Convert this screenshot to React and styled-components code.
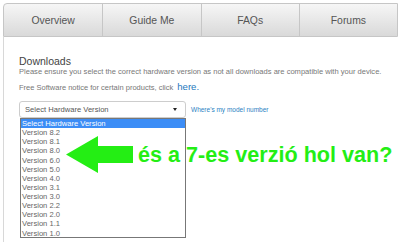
import React from 'react';
import styled, { createGlobalStyle } from 'styled-components';

const GlobalStyle = createGlobalStyle`
  html, body {
    margin: 0;
    padding: 0;
    background: #fff;
  }
  #root {
    width: 400px;
    height: 242px;
    overflow: hidden;
  }
`

const Page = styled.div`
  position: relative;
  width: 400px;
  height: 242px;
  box-sizing: border-box;
  padding: 3px 2px 0 3px;
  display: flex;
  flex-direction: column;
  font-family: "Liberation Sans", Arial, sans-serif;
  background: #fff;
`

const TabBar = styled.div`
  display: grid;
  grid-template-columns: repeat(4, 1fr);
  height: 32px;
  border: 1px solid #c6c6c6;
  border-radius: 4px 0 0 0;
  background: linear-gradient(#f6f6f6, #d9d9d9);
`

const Tab = styled.div`
  display: flex;
  align-items: center;
  justify-content: center;
  font-size: 10.4px;
  color: #555;
  border-left: ${props => (props.first ? 'none' : '1px solid #c6c6c6')};
`

const Panel = styled.div`
  flex: 1;
  border-left: 1px solid #d8d8d8;
  padding: 18px 0 0 15px;
`

const Title = styled.div`
  font-size: 10.5px;
  line-height: 12px;
  color: #444;
`

const Desc = styled.div`
  font-size: 7.55px;
  line-height: 9px;
  color: #777;
  white-space: nowrap;
`

const Notice = styled.div`
  margin-top: 5px;
  font-size: 7.5px;
  line-height: 12px;
  color: #777;
  white-space: nowrap;
`

const Link = styled.span`
  color: ${props => (props.strong ? '#2579bd' : '#2b7fc3')};
  font-size: ${props => props.size || 7}px;
  margin-left: ${props => props.gap || 0}px;
`

const SelectRow = styled.div`
  margin-top: 7px;
  display: flex;
  align-items: center;
  gap: 5px;
`

const SelectWrap = styled.div`
  position: relative;
`

const SelectBox = styled.div`
  box-sizing: border-box;
  width: 167px;
  height: 17px;
  border: 1px solid #cdcdcd;
  border-radius: 3px;
  display: flex;
  align-items: center;
  justify-content: space-between;
  padding: 0 8px 0 5px;
  font-size: 7.6px;
  color: #555;
`

const Caret = styled.span`
  width: 0;
  height: 0;
  border-left: 2.5px solid transparent;
  border-right: 2.5px solid transparent;
  border-top: 3px solid #222;
`

const DropList = styled.div`
  position: absolute;
  top: 17px;
  left: 1px;
  right: 0;
  box-sizing: border-box;
  height: 120px;
  border: 1px solid #777;
  background: #fff;
  z-index: 2;
`

const Option = styled.div`
  height: 9.14px;
  line-height: 9.14px;
  padding-left: 1px;
  font-size: 7.6px;
  color: ${props => (props.active ? '#fff' : '#666')};
  background: ${props => (props.active ? '#3c8df6' : 'transparent')};
  white-space: nowrap;
`

const Arrow = styled.svg`
  position: absolute;
  left: 0;
  top: 0;
  z-index: 3;
`

const Remark = styled.div`
  position: absolute;
  left: 138px;
  top: 143px;
  font-family: "Liberation Sans", Arial, sans-serif;
  font-weight: bold;
  font-size: 21.6px;
  line-height: 1.117;
  color: #24ee14;
  white-space: nowrap;
  z-index: 3;
`

const tabs = ['Overview', 'Guide Me', 'FAQs', 'Forums'];
const versions = ['8.2', '8.1', '8.0', '6.0', '5.0', '4.0', '3.1', '3.0', '2.2', '2.0', '1.1', '1.0'];

export default function App() {
  return (
    <Page>
      <GlobalStyle />
      <TabBar>
        {tabs.map((t, i) => (
          <Tab key={t} first={i === 0}>{t}</Tab>
        ))}
      </TabBar>
      <Panel>
        <Title>Downloads</Title>
        <Desc>Please ensure you select the correct hardware version as not all downloads are compatible with your device.</Desc>
        <Notice>
          Free Software notice for certain products, click
          <Link size={9.6} gap={4} strong>here.</Link>
        </Notice>
        <SelectRow>
          <SelectWrap>
            <SelectBox>
              <span>Select Hardware Version</span>
              <Caret />
            </SelectBox>
            <DropList>
              <Option active>Select Hardware Version</Option>
              {versions.map(v => (
                <Option key={v}>Version {v}</Option>
              ))}
            </DropList>
          </SelectWrap>
          <Link size={6.5}>Where's my model number</Link>
        </SelectRow>
      </Panel>
      <Arrow width="400" height="242" viewBox="0 0 400 242">
        <polygon
          points="66,154.5 98,136 98,146 133,146 133,163 98,163 98,173"
          fill="#24ee14"
        />
      </Arrow>
      <Remark>és a 7-es verzió hol van?</Remark>
    </Page>
  );
}
